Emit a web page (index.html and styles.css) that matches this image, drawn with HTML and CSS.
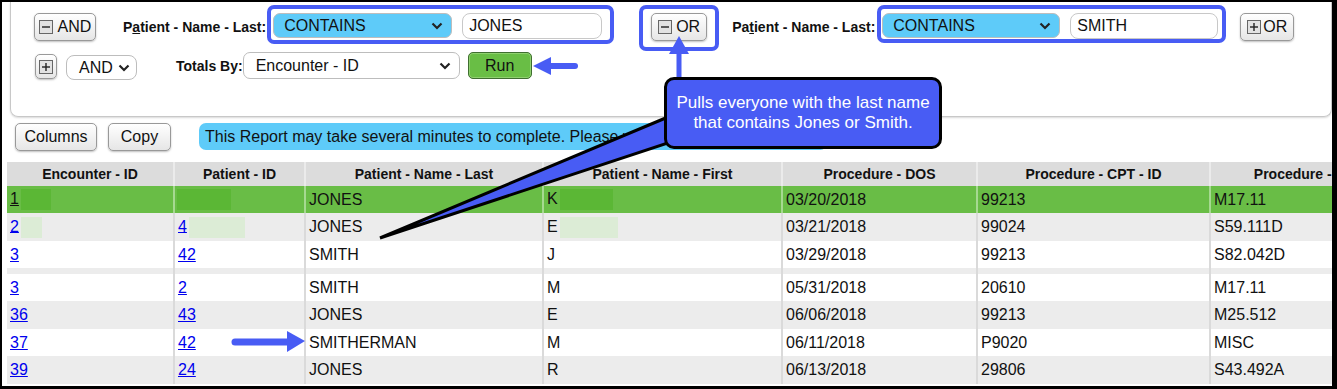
FILE: index.html
```html
<!DOCTYPE html>
<html lang="en">
<head>
    <meta charset="UTF-8">
    <meta name="viewport" content="width=device-width, initial-scale=1.0">
    <title>Report Builder</title>
    <link rel="stylesheet" href="styles.css">
</head>
<body>
<div class="frame">
    <div class="filters">
        <div class="filter-row row-one">
            <button class="btn btn-and"><svg class="box-icon" width="14" height="14" viewBox="0 0 14 14"><rect x="0.5" y="0.5" width="13" height="13"/><line x1="3" y1="7" x2="11" y2="7"/></svg>AND</button>
            <label class="field-label label-one">P<u>a</u>tient - Name - Last:</label>
            <div class="mark mark-jones">
                <div class="select select-op select-op-one">CONTAINS<svg class="chevron" width="12" height="8" viewBox="0 0 12 8"><polyline points="1.5,1.5 6,6 10.5,1.5"/></svg></div>
                <input class="text-input input-jones" type="text" value="JONES">
            </div>
            <div class="mark mark-or">
                <button class="btn btn-or"><svg class="box-icon" width="14" height="14" viewBox="0 0 14 14"><rect x="0.5" y="0.5" width="13" height="13"/><line x1="3" y1="7" x2="11" y2="7"/></svg>OR</button>
            </div>
            <label class="field-label label-two">Pa<u>t</u>ient - Name - Last:</label>
            <div class="mark mark-smith">
                <div class="select select-op select-op-two">CONTAINS<svg class="chevron" width="12" height="8" viewBox="0 0 12 8"><polyline points="1.5,1.5 6,6 10.5,1.5"/></svg></div>
                <input class="text-input input-smith" type="text" value="SMITH">
            </div>
            <button class="btn btn-add-or"><svg class="box-icon" width="14" height="14" viewBox="0 0 14 14"><rect x="0.5" y="0.5" width="13" height="13"/><line x1="3" y1="7" x2="11" y2="7"/><line x1="7" y1="3" x2="7" y2="11"/></svg>OR</button>
        </div>
        <div class="filter-row row-two">
            <button class="btn btn-plus"><svg class="box-icon" width="14" height="14" viewBox="0 0 14 14"><rect x="0.5" y="0.5" width="13" height="13"/><line x1="3" y1="7" x2="11" y2="7"/><line x1="7" y1="3" x2="7" y2="11"/></svg></button>
            <div class="select select-and">AND<svg class="chevron" width="12" height="8" viewBox="0 0 12 8"><polyline points="1.5,1.5 6,6 10.5,1.5"/></svg></div>
            <label class="field-label totals-label">Totals By:</label>
            <div class="select select-totals">Encounter - ID<svg class="chevron" width="12" height="8" viewBox="0 0 12 8"><polyline points="1.5,1.5 6,6 10.5,1.5"/></svg></div>
            <button class="btn btn-run">Run</button>
        </div>
    </div>

    <div class="toolbar">
        <button class="btn btn-columns">Columns</button>
        <button class="btn btn-copy">Copy</button>
        <div class="notice">This Report may take several minutes to complete. Please wait.</div>
    </div>

    <table class="report">
        <colgroup>
            <col class="c-enc"><col class="c-pid"><col class="c-last"><col class="c-first"><col class="c-dos"><col class="c-cpt"><col class="c-proc">
        </colgroup>
        <thead>
            <tr>
                <th>Encounter - ID</th>
                <th>Patient - ID</th>
                <th>Patient - Name - Last</th>
                <th>Patient - Name - First</th>
                <th>Procedure - DOS</th>
                <th>Procedure - CPT - ID</th>
                <th>Procedure - ICD10</th>
            </tr>
        </thead>
        <tbody>
            <tr class="row-green">
                <td><a href="#">1</a><span class="redact redact-dark w30"></span></td>
                <td><span class="redact redact-dark w54 flush"></span></td>
                <td>JONES</td>
                <td>K<span class="redact redact-dark w53"></span></td>
                <td>03/20/2018</td>
                <td>99213</td>
                <td>M17.11</td>
            </tr>
            <tr class="row-gray tall">
                <td><a href="#">2</a><span class="redact redact-light w21"></span></td>
                <td><a href="#">4</a><span class="redact redact-light w56"></span></td>
                <td>JONES</td>
                <td>E<span class="redact redact-light w58"></span></td>
                <td>03/21/2018</td>
                <td>99024</td>
                <td>S59.111D</td>
            </tr>
            <tr>
                <td><a href="#">3</a></td>
                <td><a href="#">42</a></td>
                <td>SMITH</td>
                <td>J</td>
                <td>03/29/2018</td>
                <td>99213</td>
                <td>S82.042D</td>
            </tr>
            <tr class="row-gap">
                <td></td><td></td><td></td><td></td><td></td><td></td><td></td>
            </tr>
            <tr>
                <td><a href="#">3</a></td>
                <td><a href="#">2</a></td>
                <td>SMITH</td>
                <td>M</td>
                <td>05/31/2018</td>
                <td>20610</td>
                <td>M17.11</td>
            </tr>
            <tr class="row-gray tall">
                <td><a href="#">36</a></td>
                <td><a href="#">43</a></td>
                <td>JONES</td>
                <td>E</td>
                <td>06/06/2018</td>
                <td>99213</td>
                <td>M25.512</td>
            </tr>
            <tr>
                <td><a href="#">37</a></td>
                <td><a href="#">42</a></td>
                <td>SMITHERMAN</td>
                <td>M</td>
                <td>06/11/2018</td>
                <td>P9020</td>
                <td>MISC</td>
            </tr>
            <tr class="row-gray tall">
                <td><a href="#">39</a></td>
                <td><a href="#">24</a></td>
                <td>JONES</td>
                <td>R</td>
                <td>06/13/2018</td>
                <td>29806</td>
                <td>S43.492A</td>
            </tr>
        </tbody>
    </table>

    <!-- annotation layer -->
    <svg class="annotations" width="1337" height="389" viewBox="0 0 1337 389">
        <polygon class="tail" points="668,117 380,238 668,143"/>
        <line class="arrow-line" x1="679" y1="52" x2="679" y2="80" stroke-width="5"/>
        <polygon class="arrow-head" points="679,36 669,54 689,54"/>
        <line class="arrow-line" x1="550" y1="66" x2="575" y2="66" stroke-width="6"/>
        <polygon class="arrow-head" points="533,66 551,57 551,75"/>
        <line class="arrow-line" x1="235" y1="342" x2="290" y2="342" stroke-width="7"/>
        <polygon class="arrow-head" points="305,341 287,331 287,352"/>
    </svg>
    <div class="callout">Pulls everyone with the last name<br>that contains Jones or Smith.</div>
</div>
</body>
</html>
```

FILE: styles.css
```css
html, body {
    margin: 0;
    padding: 0;
    background: #fff;
}
.frame {
    position: relative;
    box-sizing: border-box;
    width: 1337px;
    height: 389px;
    border-style: solid;
    border-color: #000;
    border-width: 2px 5px 3px 2px;
    overflow: hidden;
    background: #fff;
    font-family: "Liberation Sans", Arial, sans-serif;
    font-size: 16px;
    color: #111;
}
button, input {
    font: inherit;
    color: inherit;
}

/* filter panel */
.filters {
    box-sizing: border-box;
    height: 115px;
    margin-left: 8px;
    padding: 3px 0 0 23px;
    border: 1px solid #c8c8c8;
    border-top: none;
    border-radius: 0 0 8px 8px;
    box-shadow: 0 1px 2px rgba(0, 0, 0, 0.15);
}
.filter-row {
    display: flex;
    align-items: flex-start;
}
.row-one {
    height: 46px;
}
.row-two {
    margin-top: 1px;
}
.btn {
    display: inline-flex;
    align-items: center;
    justify-content: center;
    gap: 4px;
    box-sizing: border-box;
    height: 28px;
    padding: 0;
    border: 1px solid #999;
    border-radius: 5px;
    background: linear-gradient(#fff, #e6e6e6);
    box-shadow: 0 1px 2px rgba(0, 0, 0, 0.25);
    cursor: pointer;
}
.box-icon rect {
    fill: #e2e2e2;
    stroke: #666;
}
.box-icon line {
    stroke: #222;
    stroke-width: 1.4;
}
.btn-and {
    width: 62px;
    margin-top: 8px;
    gap: 5px;
}
.field-label {
    font-size: 14px;
    font-weight: bold;
    line-height: 28px;
    white-space: nowrap;
}
.label-one {
    margin: 8px 0 0 27px;
}
.label-two {
    margin: 8px 0 0 13px;
}
.mark {
    display: flex;
    align-items: flex-start;
    gap: 10px;
    border: 4px solid #485cf4;
    border-radius: 7px;
}
.mark-jones {
    margin-left: 1px;
    padding: 4px 8px 1px 2px;
}
.mark-or {
    margin-left: 25px;
    padding: 4px 8px 6px 8px;
}
.mark-smith {
    margin-left: 2px;
    padding: 4px 4px 0 1px;
}
.btn-or {
    width: 56px;
}
.btn-add-or {
    width: 54px;
    margin: 8px 0 0 14px;
    gap: 2px;
}
.select {
    display: flex;
    align-items: center;
    justify-content: space-between;
    box-sizing: border-box;
    height: 25px;
    padding: 0 8px 0 10px;
    border: 1px solid #bdbdbd;
    border-radius: 7px;
    background: #fff;
    white-space: nowrap;
}
.chevron polyline {
    fill: none;
    stroke: #222;
    stroke-width: 2.2;
}
.select-op {
    background: #5ecbf9;
}
.select-op-one {
    width: 179px;
}
.select-op-two {
    width: 178px;
}
.text-input {
    box-sizing: border-box;
    height: 26px;
    padding: 0 6px;
    border: 1px solid #c8c8c8;
    border-radius: 8px;
    outline: none;
}
.input-jones {
    width: 140px;
}
.input-smith {
    width: 148px;
}
.btn-plus {
    width: 22px;
    height: 25px;
    margin: 2px 0 0 1px;
}
.select-and {
    width: 71px;
    margin: 3px 0 0 9px;
    padding: 0 6px 0 12px;
    border-radius: 8px;
}
.totals-label {
    margin-left: 39px;
}
.select-totals {
    width: 217px;
    height: 27px;
    padding-left: 12px;
}
.btn-run {
    width: 64px;
    height: 27px;
    margin-left: 8px;
    border-color: #3f6e30;
    background: #69be45;
    box-shadow: inset 0 0 0 1px #8fd06f;
}

/* toolbar */
.toolbar {
    display: flex;
    align-items: flex-start;
    margin: 6px 0 0 13px;
}
.btn-columns {
    width: 82px;
}
.btn-copy {
    width: 63px;
    margin-left: 11px;
}
.notice {
    box-sizing: border-box;
    width: 628px;
    height: 27px;
    margin-left: 28px;
    padding-left: 6px;
    line-height: 27px;
    border-radius: 7px;
    background: #5ecbf9;
    white-space: nowrap;
    overflow: hidden;
}

/* report table */
.report {
    width: 1411px;
    margin: 11px 0 0 5px;
    border-collapse: collapse;
    table-layout: fixed;
}
.c-enc { width: 167px; }
.c-pid { width: 131px; }
.c-last { width: 238px; }
.c-first { width: 239px; }
.c-dos { width: 195px; }
.c-cpt { width: 233px; }
.c-proc { width: 208px; }
.report th {
    height: 24px;
    padding: 0;
    background: #dcdcdc;
    border-left: 2px solid #ebebeb;
    font-size: 14px;
    font-weight: bold;
    text-align: center;
    white-space: nowrap;
    overflow: hidden;
}
.report td {
    height: 27px;
    padding: 0 3px;
    border-left: 2px solid #dadada;
    white-space: nowrap;
    overflow: hidden;
}
.report th:first-child,
.report td:first-child {
    border-left: none;
}
.report tr.tall td {
    height: 28px;
}
.report a {
    color: #0000ee;
}
.row-green td {
    background: #69bd46;
    border-left-color: #a6d991;
}
.row-green a {
    color: #111;
}
.row-gray td {
    background: #ececec;
}
.report tr.row-gap td {
    height: 6px;
    padding: 0;
    background: #ececec;
}
.redact {
    display: inline-block;
    height: 21px;
    margin-left: 2px;
    vertical-align: middle;
}
.redact.flush {
    margin-left: -1px;
}
.redact-dark { background: #5bb735; }
.redact-light { background: #dcecd6; }
.w21 { width: 21px; }
.w30 { width: 30px; }
.w53 { width: 53px; }
.w54 { width: 54px; }
.w56 { width: 56px; }
.w58 { width: 58px; }

/* annotations drawn over the screenshot */
.annotations {
    position: absolute;
    top: -2px;
    left: -2px;
    pointer-events: none;
}
.tail {
    fill: #485cf4;
    stroke: #000;
    stroke-width: 3;
}
.arrow-line {
    stroke: #485cf4;
    stroke-linecap: round;
}
.arrow-head {
    fill: #485cf4;
}
.callout {
    position: absolute;
    top: 75px;
    left: 662px;
    box-sizing: border-box;
    width: 278px;
    height: 72px;
    display: flex;
    align-items: center;
    justify-content: center;
    border: 3px solid #000;
    border-radius: 10px;
    background: #485cf4;
    color: #fff;
    font-size: 17px;
    line-height: 20px;
    text-align: center;
}
```
